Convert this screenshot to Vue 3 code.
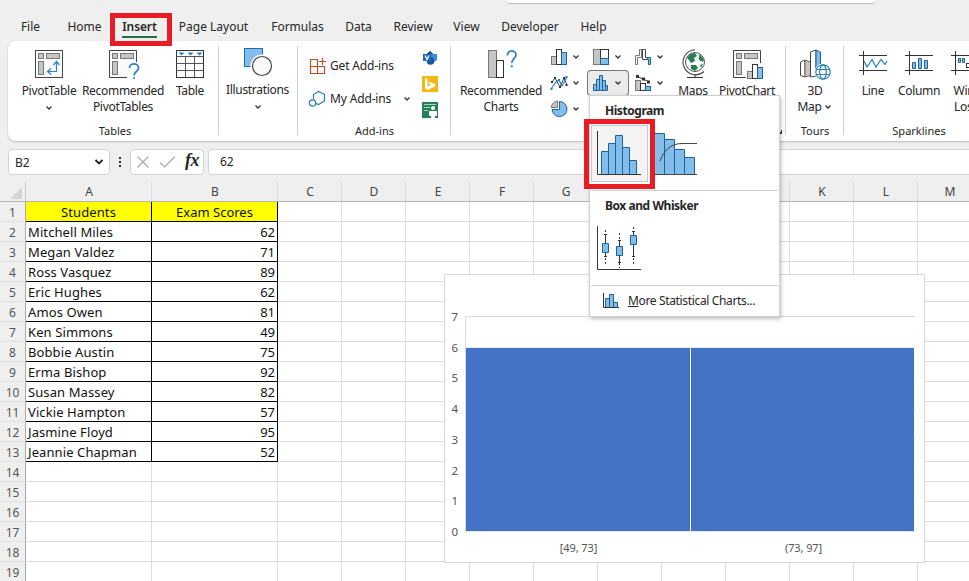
<template>
  <div class="excel">
    <div class="search-box"></div>

    <nav class="tabs">
      <div
        v-for="tab in tabs"
        :key="tab.name"
        class="tab"
        :class="{ active: tab.name === activeTab }"
        :style="{ width: tab.width + 'px' }"
      >
        <span>{{ tab.name }}</span>
      </div>
      <div class="highlight tab-highlight"></div>
    </nav>

    <div class="ribbon">
      <section class="group tables">
        <div class="tools">
          <div class="tool w58">
            <svg width="30" height="30" viewBox="0 0 30 30">
              <rect x="1.5" y="1.5" width="27" height="27" fill="#fafafa" stroke="#444" />
              <rect x="4.5" y="4.5" width="5" height="5" class="grey" />
              <rect x="12.5" y="4.5" width="13" height="5" class="grey" />
              <rect x="4.5" y="12.5" width="5" height="13" class="grey" />
              <path d="M14 22.5H22.5V13M17 19.5L13.5 22.5L17 25.5M19.5 16L22.5 12.5L25.5 16" class="line-blue" />
            </svg>
            <span>PivotTable</span>
            <Chevron class="below" />
          </div>
          <div class="tool w90">
            <svg width="30" height="30" viewBox="0 0 30 30">
              <path d="M19 28.5H1.5V1.5H28.5V13" fill="#fafafa" stroke="#444" />
              <rect x="4.5" y="4.5" width="5" height="5" class="grey" />
              <rect x="12.5" y="4.5" width="13" height="5" class="grey" />
              <rect x="4.5" y="12.5" width="5" height="13" class="grey" />
              <path d="M21.5 19C21.5 13.5 30.5 13.5 30.5 19C30.5 22.5 26 22.5 26 26.5M26 28.3V30" class="line-blue thick" />
            </svg>
            <span>Recommended<br />PivotTables</span>
          </div>
          <div class="tool w44">
            <svg width="30" height="30" viewBox="0 0 30 30">
              <rect x="1.5" y="1.5" width="27" height="27" fill="#fff" stroke="#333" />
              <path d="M1.5 7.5H28.5M1.5 14.5H28.5M1.5 21.5H28.5M10.5 7.5V28M19.5 7.5V28" fill="none" stroke="#555" />
              <path d="M3.500 3.500H9.500L6.500 6.500ZM12.500 3.500H18.500L15.500 6.500ZM21.500 3.500H27.500L24.500 6.500Z" fill="#2b7cb8" />
            </svg>
            <span>Table</span>
          </div>
        </div>
        <footer>Tables</footer>
      </section>

      <section class="group illustrations">
        <div class="tool">
          <svg width="30" height="32" viewBox="0 0 30 32">
            <rect x="1.5" y="2.5" width="18" height="18" fill="#83bdec" stroke="#1e6fae" />
            <circle cx="19" cy="20" r="11.5" fill="#fff" />
            <circle cx="19" cy="20" r="9.5" fill="#fafafa" stroke="#444" stroke-width="1.2" />
          </svg>
          <span>Illustrations</span>
          <Chevron class="below" />
        </div>
      </section>

      <section class="group addins">
        <div class="addins-body">
          <div class="addin-list">
            <div class="addin">
              <svg width="18" height="18" viewBox="0 0 18 18">
                <path d="M2.500 2.500H9.500V16.500H2.500ZM2.500 9.500H16.500V16.500H9.500M14.500 1V8M11 4.500H18" fill="none" stroke="#b5502b" stroke-width="1.200" />
              </svg>
              <span>Get Add-ins</span>
            </div>
            <div class="addin">
              <svg width="18" height="18" viewBox="0 0 18 18">
                <path d="M5.500 9V4.500L10.500 1.500L16.500 4.500V11L10.500 14.500L8 13.500" fill="none" stroke="#277ba5" stroke-width="1.200" />
                <circle cx="4.500" cy="13" r="3.200" fill="none" stroke="#277ba5" stroke-width="1.200" />
              </svg>
              <span>My Add-ins</span>
              <Chevron />
            </div>
          </div>
          <div class="addin-logos">
            <svg width="16" height="16" viewBox="0 0 16 16">
              <path d="M5 3.5L8 1L11 3.5V7H5Z" fill="#164b86" />
              <path d="M9 4H15V10L12 12H8Z" fill="#3b8edb" />
              <circle cx="8.5" cy="11" r="3.8" fill="#12599c" />
              <rect x="1" y="4" width="8" height="7" fill="#2368b5" />
              <path d="M3 5.5L5 9.5L7 5.500" fill="none" stroke="#fff" stroke-width="1.3" />
            </svg>
            <svg width="16" height="16" viewBox="0 0 16 16">
              <rect width="16" height="16" fill="#f2b817" />
              <path d="M3 2L5.5 3V10.5L9 8.7L7.5 8L6.5 5.5L13 8V10.5L5.5 14L3 12.5Z" fill="#fff" />
            </svg>
            <svg width="16" height="16" viewBox="0 0 16 16">
              <rect width="16" height="16" fill="#26815a" />
              <path d="M2 2.5H14M2 5.5H8M2 8.5H6" stroke="#a5d4bc" />
              <circle cx="11" cy="6" r="2" fill="#fff" />
              <path d="M7 9H15V14H13V16H9V14H7Z" fill="#fff" />
            </svg>
          </div>
        </div>
        <footer>Add-ins</footer>
      </section>

      <section class="group charts">
        <div class="tools">
          <div class="tool w90">
            <svg width="30" height="30" viewBox="0 0 30 30">
              <rect x="2.5" y="1.5" width="8" height="27" fill="#c5c5c5" stroke="#777" />
              <rect x="10.5" y="11.5" width="7" height="17" fill="#fff" stroke="#333" />
              <path d="M21.5 6.5C21 0.5 30 0.5 30 6C30 9.5 25.800 9.500 25.800 14M25.800 16.200V18.300" class="line-blue thick" />
            </svg>
            <span>Recommended<br />Charts</span>
          </div>

          <div class="chart-types">
            <div class="chart-type">
              <svg width="18" height="18" viewBox="0 0 18 18">
                <rect x="1.5" y="8.5" width="5" height="8" class="grey" />
                <rect x="6.5" y="1.5" width="5" height="15" fill="#fff" stroke="#333" />
                <rect x="11.5" y="4.5" width="5" height="12" class="blue" />
              </svg>
              <Chevron />
            </div>
            <div class="chart-type">
              <svg width="18" height="18" viewBox="0 0 18 18">
                <rect x="1.5" y="1.5" width="7" height="15" class="grey" />
                <rect x="8.5" y="1.5" width="8" height="9" fill="#fff" stroke="#333" />
                <rect x="8.5" y="10.5" width="8" height="6" class="blue" />
              </svg>
              <Chevron />
            </div>
            <div class="chart-type">
              <svg width="18" height="18" viewBox="0 0 18 18">
                <path d="M1.500 16.500V7.500H5.500V1.500H8.500V11M1.500 16.500H3.500V9.500H7.500V1.500" fill="none" stroke="#777" />
                <path d="M8.500 1.500H11.500V9.500H16.500M8.500 1.500V11.500H13" fill="none" stroke="#444" />
                <path d="M13.500 9.500H16.500V16.500H14.500V11.500H13.500Z" class="blue" />
              </svg>
              <Chevron />
            </div>
            <div class="chart-type">
              <svg width="18" height="18" viewBox="0 0 18 18">
                <path d="M2 8L5 4L10 13L14 4L17 11" fill="none" stroke="#444" />
                <path d="M1 15L6 8L9 6L12 12L17 3" class="line-blue" />
                <path d="M4 3h2v2h-2zM9 12h2v2h-2zM13 3h2v2h-2zM1 7h2v2h-2zM15.500 10h2v2h-2z" fill="#333" />
                <path d="M0.5 14h2v2h-2zM8 5h2v2h-2zM15.5 2h2v2h-2z" fill="#2b7cb8" />
              </svg>
              <Chevron />
            </div>
            <div class="chart-type pressed">
              <svg width="18" height="18" viewBox="0 0 18 18">
                <path d="M1.5 10.5H4.5V16.5H1.5ZM4.5 5.500H7.500V16.500H4.500ZM7.500 1.500H10.500V16.500H7.500ZM10.500 6.500H13.500V16.500H10.500ZM13.500 11.500H15.500V16.500H13.500Z" class="blue" />
              </svg>
              <Chevron />
            </div>
            <div class="chart-type">
              <svg width="18" height="18" viewBox="0 0 18 18">
                <rect x="1.5" y="6.5" width="5" height="10" class="grey" />
                <rect x="6.5" y="9.5" width="5" height="7" fill="#fff" stroke="#333" />
                <rect x="11.5" y="12.5" width="5" height="4" class="blue" />
                <path d="M3 2.5L9 5L15 8" fill="none" stroke="#333" />
                <path d="M2 1h3v3h-3zM8 3.5h3v3h-3zM13 6.5h3v3h-3z" fill="#333" />
              </svg>
              <Chevron />
            </div>
            <div class="chart-type">
              <svg width="18" height="18" viewBox="0 0 18 18">
                <path d="M9.5 1.5A7.5 7.5 0 1 1 2 9.5H9.5Z" class="blue" />
                <path d="M7.5 7.5V1A7 7 0 0 0 1.2 7.5Z" class="grey" />
              </svg>
              <Chevron />
            </div>
          </div>

          <div class="tool w44">
            <svg width="30" height="30" viewBox="0 0 30 30">
              <path d="M17 0.8A12.5 12.5 0 1 0 26 22.5" fill="none" stroke="#444" stroke-width="1.1" />
              <circle cx="17" cy="13" r="9.5" fill="#fafafa" stroke="#555" />
              <path d="M9 9L12 5L17 4L19 7L16 9L17 12L13 14L11 11ZM21 5L26 10L25 13L21 11ZM13 16L18 16L20 19L17 22L13 20ZM22 16L25 15L23 19Z" fill="#25804f" />
              <path d="M17 25V28M9 28.5H25" stroke="#333" />
            </svg>
            <span>Maps</span>
          </div>
          <div class="tool w64">
            <svg width="30" height="30" viewBox="0 0 30 30">
              <path d="M14 28.5H1.5V1.5H28.5V14" fill="#fafafa" stroke="#444" />
              <rect x="4.5" y="4.5" width="5" height="5" class="grey" />
              <rect x="12.5" y="4.5" width="13" height="5" class="grey" />
              <rect x="4.5" y="12.5" width="5" height="13" class="grey" />
              <rect x="15.5" y="22.5" width="5" height="7" class="grey" />
              <rect x="20.5" y="15.5" width="5" height="14" fill="#fff" stroke="#333" />
              <rect x="25.5" y="18.5" width="5" height="11" class="blue" />
            </svg>
            <span>PivotChart</span>
          </div>
        </div>
        <svg class="launcher" width="8" height="8" viewBox="0 0 8 8">
          <path d="M0.5 4V0.5H4M3 3L6.5 6.5M6.5 3V6.5H3" fill="none" stroke="#333" />
        </svg>
      </section>

      <section class="group tours">
        <div class="tools">
          <div class="tool w58">
            <svg width="32" height="30" viewBox="0 0 32 30">
              <path d="M1.5 13L6 11V28L1.5 26.5Z" fill="#fff" stroke="#444" />
              <path d="M6 11L11.5 13V26.5L6 28Z" fill="#c5c5c5" stroke="#666" />
              <path d="M11.5 3L17 1V27L11.5 28Z" fill="#fff" stroke="#444" />
              <path d="M17 1L21.500 3V18L17 22Z" class="blue" />
              <circle cx="24" cy="23" r="8.5" fill="#fff" />
              <g class="line-blue">
                <circle cx="24" cy="23" r="7.2" />
                <ellipse cx="24" cy="23" rx="3.3" ry="7.2" />
                <path d="M17 20.5H31M17 25.5H31" />
              </g>
            </svg>
            <span>3D<br />Map <Chevron /></span>
          </div>
        </div>
        <footer>Tours</footer>
      </section>

      <section class="group sparklines">
        <div class="tools">
          <div class="tool w46">
            <svg width="30" height="30" viewBox="0 0 30 30">
              <path d="M1 6.5H29M1 21.5H29M5.5 2V26" stroke="#333" fill="none" />
              <path d="M6 12L9 18L14 10.5L18 18L23 10.5L27 15.5L29 12" class="line-blue" />
            </svg>
            <span>Line</span>
          </div>
          <div class="tool w46">
            <svg width="30" height="30" viewBox="0 0 30 30">
              <path d="M1 6.5H29M1 21.5H29M5.5 2V26" stroke="#333" fill="none" />
              <path d="M8.5 13.5H11.5V19.5H8.5ZM14.5 9.5H17.5V19.5H14.5ZM20.5 11.5H23.5V19.5H20.500Z" class="blue" />
            </svg>
            <span>Column</span>
          </div>
          <div class="tool w46">
            <svg width="30" height="30" viewBox="0 0 30 30">
              <path d="M1 6.5H29M1 21.5H29M5.5 2V26" stroke="#333" fill="none" />
              <path d="M8.5 9.5H10.5V13.5H8.5ZM12.5 9.5H14.5V13.5H12.5Z" class="blue" />
              <rect x="16.5" y="14.5" width="3" height="4" fill="#fff" stroke="#333" />
            </svg>
            <span class="win-loss">Win/<br />Loss</span>
          </div>
        </div>
        <footer>Sparklines</footer>
      </section>
    </div>

    <div class="formula-bar">
      <div class="name-box">
        <span>B2</span>
        <svg width="10" height="8" viewBox="0 0 10 8"><path d="M1.5 2L5 5.5L8.5 2" fill="none" stroke="#222" stroke-width="1.8" /></svg>
      </div>
      <div class="dots"><i></i><i></i><i></i></div>
      <div class="fx-box">
        <svg width="14" height="14" viewBox="0 0 14 14"><path d="M1.5 1.5L12.5 12.5M12.5 1.5L1.5 12.5" stroke="#aaa" stroke-width="1.2" /></svg>
        <svg width="17" height="14" viewBox="0 0 17 14"><path d="M1 7.5L5.5 12L16 1.5" fill="none" stroke="#aaa" stroke-width="1.2" /></svg>
        <em>fx</em>
      </div>
      <div class="formula">62</div>
    </div>

    <div class="sheet">
      <div class="sheet-row head">
        <div class="corner"></div>
        <div
          v-for="(col, i) in columns"
          :key="col"
          class="col-head"
          :class="{ wide: i < 2 }"
        >{{ col }}</div>
      </div>
      <div v-for="n in 19" :key="n" class="sheet-row">
        <div class="row-head">{{ n }}</div>
        <div
          v-for="(col, i) in columns"
          :key="col"
          class="cell"
          :class="{ wide: i < 2, filled: i < 2 && n <= rows.length, title: n === 1, score: i === 1 }"
        >{{ rows[n - 1]?.[i] }}</div>
      </div>

      <svg class="chart" width="481" height="289" viewBox="0 0 481 289">
        <rect x="0.5" y="0.5" width="480" height="288" fill="#fff" stroke="#d9d9d9" />
        <path v-for="n in 8" :key="n" :d="`M21 ${tickY(n - 1)}H471`" stroke="#d9d9d9" />
        <path d="M21.5 43V258" stroke="#d9d9d9" />
        <text v-for="n in 8" :key="'t' + n" x="14" :y="tickY(n - 1) + 4.5" text-anchor="end">{{ n - 1 }}</text>
        <rect x="22" :y="tickY(6)" width="448" :height="tickY(0) - tickY(6)" fill="#fbfbe6" />
        <g v-for="(bin, i) in bins" :key="bin.label">
          <rect
            :x="22 + i * 225"
            :y="tickY(bin.count) + 0.5"
            :width="224 - i"
            :height="tickY(0) - tickY(bin.count) - 1"
            fill="#4472c4"
          />
          <text :x="134.5 + i * 225" y="278" text-anchor="middle" class="bin">{{ bin.label }}</text>
        </g>
      </svg>
    </div>

    <div class="menu">
      <h4>Histogram</h4>
      <div class="options">
        <div class="option selected">
          <svg width="44" height="46" viewBox="0 0 44 46">
            <path d="M4.5 21.5H11.5V44.5H4.5ZM11.5 13.5H18.5V44.5H11.5ZM18.5 5.5H25.5V44.5H18.5ZM25.5 17.5H32.5V44.5H25.5ZM32.5 30.5H39.5V44.5H32.5Z" class="blue" />
            <path d="M0.5 1V44.5H44" fill="none" stroke="#333" />
          </svg>
          <div class="highlight"></div>
        </div>
        <div class="option">
          <svg width="44" height="46" viewBox="0 0 44 46">
            <path d="M0.5 3.5H10.5V44.5H0.5ZM10.5 9.5H20.5V44.5H10.5ZM20.5 19.5H30.5V44.5H20.5ZM30.5 27.5H40.5V44.5H30.5Z" class="blue" />
            <path d="M0 44.5H43M6 31C10 20 17 13.5 28 13.5H43" fill="none" stroke="#444" />
          </svg>
        </div>
      </div>
      <hr />
      <h4>Box and Whisker</h4>
      <div class="options whisker">
        <div class="option">
          <svg width="44" height="46" viewBox="0 0 44 46">
            <path d="M0.5 1V44.5H44" fill="none" stroke="#333" />
            <path d="M8.5 5V9M22.5 8V15M36.5 2V6M8.5 33V39M22.5 38V43M36.5 33V39" stroke="#333" stroke-dasharray="2 2" />
            <path d="M8.5 9V31M7 9.5H10M7 31.5H10M22.5 15V37M21 15.5H24M21 37.5H24M36.5 6V31M35 6.5H38M35 31.5H38" stroke="#333" />
            <path d="M5.5 18.5H11.5V27.5H5.5ZM19.5 21.5H25.5V30.5H19.5ZM33.5 10.5H39.5V19.5H33.5Z" class="blue" />
          </svg>
        </div>
      </div>
      <hr />
      <div class="more">
        <svg width="17" height="17" viewBox="0 0 17 17">
          <path d="M2.5 6.5H6.5V15.5H2.5ZM6.5 2.5H10.5V15.5H6.5ZM10.5 10.5H14.5V15.5H10.5Z" class="blue" />
          <path d="M0.5 1V15.5H16" fill="none" stroke="#333" />
        </svg>
        <span><u>M</u>ore Statistical Charts...</span>
      </div>
    </div>
  </div>
</template>

<script setup>
import { ref, h } from 'vue';

const Chevron = () =>
  h('svg', { width: 8, height: 6, viewBox: '0 0 8 6' }, [
    h('path', { d: 'M1.5 1.5L4 4L6.5 1.5', fill: 'none', stroke: '#333', 'stroke-width': 1.3 })
  ]);

const activeTab = ref('Insert');
const tabs = [
  { name: 'File', width: 47 },
  { name: 'Home', width: 61 },
  { name: 'Insert', width: 49 },
  { name: 'Page Layout', width: 99 },
  { name: 'Formulas', width: 69 },
  { name: 'Data', width: 53 },
  { name: 'Review', width: 56 },
  { name: 'View', width: 51 },
  { name: 'Developer', width: 76 },
  { name: 'Help', width: 51 }
];

const columns = 'ABCDEFGHIJKLM'.split('');
const rows = [
  ['Students', 'Exam Scores'],
  ['Mitchell Miles', 62],
  ['Megan Valdez', 71],
  ['Ross Vasquez', 89],
  ['Eric Hughes', 62],
  ['Amos Owen', 81],
  ['Ken Simmons', 49],
  ['Bobbie Austin', 75],
  ['Erma Bishop', 92],
  ['Susan Massey', 82],
  ['Vickie Hampton', 57],
  ['Jasmine Floyd', 95],
  ['Jeannie Chapman', 52]
];

const bins = [
  { label: '[49, 73]', count: 6 },
  { label: '(73, 97]', count: 6 }
];
const tickY = (n) => Math.round(258 - n * 30.72) - 0.5;
</script>

<style>
body {
  margin: 0;
  overflow: hidden;
}
</style>

<style scoped>
.excel {
  position: relative;
  width: 969px;
  height: 581px;
  overflow: hidden;
  background: #efefef;
  color: #262626;
  font-family: "Noto Sans", "Open Sans", sans-serif;
  font-size: 12px;
}

.excel * {
  box-sizing: border-box;
}

svg {
  display: block;
  flex: none;
  overflow: visible;
}

.grey {
  fill: #c5c5c5;
  stroke: #777;
}

.blue {
  fill: #83bdec;
  stroke: #1e6397;
}

.line-blue {
  fill: none;
  stroke: #2b83bd;
  stroke-width: 1.2;
}

.thick {
  stroke-width: 1.8;
}

.search-box {
  width: 368px;
  height: 3px;
  margin-left: 507px;
  background: #fff;
  border-radius: 0 0 4px 4px;
  box-shadow: 0 1px 1px #bbb;
}

.tabs {
  position: relative;
  display: flex;
  height: 38px;
  padding-left: 7px;
}

.tab {
  display: flex;
  justify-content: center;
  padding-top: 15px;
  line-height: 17px;
  white-space: nowrap;
}

.tab span {
  height: 20px;
}

.active {
  font-weight: 600;
  letter-spacing: -0.1px;
}

.active span {
  border-bottom: 2px solid #1e7145;
}

.highlight {
  position: absolute;
  z-index: 3;
  border: 5px solid #e81c24;
}

.tab-highlight {
  left: 110px;
  top: 10px;
  width: 62px;
  height: 33px;
}

.ribbon {
  display: flex;
  width: 980px;
  height: 100px;
  margin-left: 8px;
  background: #fff;
  border-radius: 8px;
  box-shadow: 0 1px 2px #bbb;
}

.group {
  position: relative;
  display: flex;
  flex: none;
  flex-direction: column;
  justify-content: space-between;
  padding: 8px 0 2px;
}

.group::after {
  content: "";
  position: absolute;
  right: 0;
  top: 5px;
  height: 89px;
  border-right: 1px solid #cfcfcf;
}

.tables { width: 211px; }
.illustrations { width: 79px; }
.addins { width: 153px; }
.charts { width: 335px; }
.tours { width: 58px; }
.sparklines { width: 150px; }
.sparklines::after { display: none; }

footer {
  height: 17px;
  line-height: 17px;
  font-size: 11px;
  text-align: center;
}

.tables footer {
  padding-left: 3px;
}

.tools {
  display: flex;
}

.tables .tools {
  padding-left: 12px;
}

.tool {
  display: flex;
  flex-direction: column;
  align-items: center;
  line-height: 16px;
  letter-spacing: -0.3px;
  text-align: center;
  white-space: nowrap;
}

.tool > span {
  margin-top: 4px;
  display: block;
}

.tool span svg {
  display: inline-block;
  vertical-align: 1px;
}

.below {
  margin-top: 6px;
}

.w44 { width: 44px; }
.w46 { width: 46px; }
.w58 { width: 58px; }
.w64 { width: 64px; }
.w90 { width: 90px; }

.tool > .win-loss {
  padding-left: 2px;
}

.illustrations {
  padding: 5px 2px 0 0;
}

.addins-body {
  display: flex;
  padding-left: 10px;
}

.addin-list {
  width: 115px;
}

.addin {
  display: flex;
  align-items: center;
  height: 33px;
  gap: 4px;
  letter-spacing: -0.15px;
}

.addin > svg:last-child {
  margin-left: 8px;
}

.addin-logos {
  display: flex;
  flex-direction: column;
  gap: 10px;
  padding-top: 1px;
  margin-left: -1px;
}

.charts .tools {
  padding-left: 5px;
}

.chart-types {
  display: grid;
  grid-template-columns: repeat(3, 42px);
  grid-auto-rows: 26px;
  margin: -5px 0 0 2px;
  width: 123px;
}

.chart-type {
  display: flex;
  align-items: center;
  width: 38px;
  height: 24px;
  gap: 4px;
  padding-left: 2px;
  margin-top: 1px;
}

.pressed {
  width: 40px;
  margin-left: -2px;
  padding-left: 4px;
  background: #ebebeb;
  box-shadow: 0 0 0 1px #777;
  border-radius: 3px;
}

.launcher {
  position: absolute;
  right: 3px;
  bottom: 6px;
}

.sparklines .tools {
  padding-left: 6px;
}

.formula-bar {
  display: flex;
  height: 41px;
  padding: 8px 0 0 8px;
}

.formula-bar > div {
  flex: none;
  height: 26px;
  background: #fff;
  border: 1px solid #d4d4d4;
  border-radius: 4px;
}

.formula-bar > .name-box {
  display: flex;
  align-items: center;
  justify-content: space-between;
  width: 102px;
  padding: 0 5px 0 6px;
}

.formula-bar > .dots {
  display: flex;
  flex-direction: column;
  align-items: center;
  justify-content: center;
  width: 20px;
  gap: 2px;
  background: none;
  border: 0;
}

.dots i {
  width: 2px;
  height: 2px;
  background: #333;
}

.fx-box {
  display: flex;
  align-items: center;
  width: 74px;
  padding-left: 5px;
  gap: 9px;
}

.fx-box em {
  font: italic bold 18px "Liberation Serif", serif;
  letter-spacing: -0.5px;
  margin-top: -3px;
}

.formula {
  width: 780px;
  margin-left: 4px;
  padding-left: 11px;
  line-height: 24px;
}

.sheet {
  position: relative;
  width: 1008px;
  background: #fff;
}

.sheet-row {
  display: flex;
  height: 20px;
}

.head {
  background: #efefef;
  border-bottom: 1px solid #b5b5b5;
}

.corner {
  width: 26px;
  border-right: 1px solid #c8c8c8;
}

.corner::after {
  content: "";
  display: block;
  width: 0;
  margin: 5px 0 0 10px;
  border-left: 12px solid transparent;
  border-bottom: 12px solid #d4d4d4;
}

.col-head,
.cell {
  flex: none;
  width: 64px;
  border-right: 1px solid #dcdcdc;
}

.col-head {
  padding-left: 1px;
  line-height: 20px;
  text-align: center;
  color: #444;
}

.wide {
  width: 126px;
}

.row-head {
  flex: none;
  width: 26px;
  line-height: 21px;
  text-align: center;
  color: #555;
  background: #efefef;
  border-right: 1px solid #aaa;
  border-bottom: 1px solid #e2e2e2;
}

.cell {
  padding: 0 2px;
  line-height: 21px;
  font-size: 13px;
  letter-spacing: 0.1px;
  color: #111;
  border-bottom: 1px solid #dcdcdc;
}

.filled {
  border-color: #000;
}

.score {
  text-align: right;
  letter-spacing: 0;
}

.filled.title {
  text-align: center;
  background: #ff0;
}

.chart {
  position: absolute;
  left: 444px;
  top: 92px;
}

.chart text {
  font-size: 11.5px;
  fill: #555;
}

.chart .bin {
  font-size: 11px;
  letter-spacing: -0.1px;
}

.menu {
  position: absolute;
  left: 589px;
  top: 95px;
  width: 191px;
  height: 222px;
  z-index: 2;
  background: #fff;
  border: 1px solid #cfcfcf;
  box-shadow: 1px 2px 4px rgba(0, 0, 0, 0.25);
}

h4 {
  margin: 0;
  padding: 6px 0 0 15px;
  font-size: 12px;
  line-height: 18px;
  letter-spacing: -0.45px;
}

.options {
  display: flex;
  height: 65px;
  padding: 5px 0 0 1px;
}

.option {
  position: relative;
  width: 57px;
  height: 57px;
  padding: 5px 0 0 6px;
}

.selected {
  background: #f3f3f3;
  border: 1px solid #c8c8c8;
  padding: 4px 0 0 5px;
}

.option .highlight {
  left: -8px;
  top: -7px;
  width: 71px;
  height: 70px;
}

hr {
  height: 1px;
  margin: 5px 1px 0;
  background: #d0d0d0;
  border: 0;
}

.whisker {
  height: 65px;
}

.more {
  display: flex;
  align-items: center;
  height: 28px;
  padding-left: 13px;
  gap: 8px;
  letter-spacing: -0.35px;
}
</style>
